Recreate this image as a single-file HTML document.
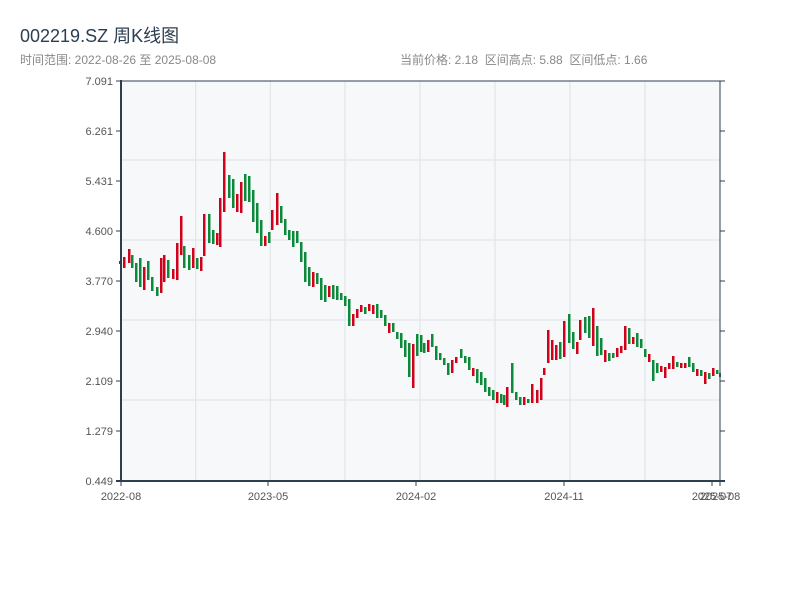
<!DOCTYPE html>
<html><head><meta charset="utf-8"><style>
body{margin:0;width:800px;height:600px;background:#fff;font-family:"Liberation Sans","Noto Sans CJK SC",sans-serif;position:relative;overflow:hidden}
.t{position:absolute;left:20px;top:22px;font-size:18px;color:#2c3e50;z-index:2}
.s{position:absolute;top:51px;font-size:12px;color:#888;z-index:2}
svg{position:absolute;left:0;top:0}
svg text{font-family:"Liberation Sans",sans-serif;font-size:11px;fill:#555}
.r{fill:#d0021b}.g{fill:#0a8a3a}
</style></head><body>
<div class="t">002219.SZ 周K线图</div>
<div class="s" style="left:20px">时间范围: 2022-08-26 至 2025-08-08</div>
<div class="s" style="left:400px">当前价格: 2.18 &nbsp;区间高点: 5.88 &nbsp;区间低点: 1.66</div>
<svg width="800" height="600" viewBox="0 0 800 600">
<rect x="121" y="81" width="599" height="400" fill="#f6f8fa"/>
<g stroke="#dfe2e6" stroke-width="1">
<line x1="195.7" y1="81" x2="195.7" y2="481"/><line x1="270.3" y1="81" x2="270.3" y2="481"/><line x1="345" y1="81" x2="345" y2="481"/><line x1="420" y1="81" x2="420" y2="481"/><line x1="495" y1="81" x2="495" y2="481"/><line x1="570" y1="81" x2="570" y2="481"/><line x1="645" y1="81" x2="645" y2="481"/>
<line x1="121" y1="160" x2="720" y2="160"/><line x1="121" y1="240" x2="720" y2="240"/><line x1="121" y1="320" x2="720" y2="320"/><line x1="121" y1="400" x2="720" y2="400"/>
</g>
<g>
<rect class="r" x="119" y="261" width="2.5" height="3"/>
<rect class="r" x="123" y="257" width="2.5" height="11"/>
<rect class="r" x="128" y="249" width="2.5" height="14"/>
<rect class="g" x="131" y="255" width="2.5" height="13"/>
<rect class="g" x="135" y="263" width="2.5" height="19"/>
<rect class="g" x="139" y="258" width="2.5" height="29"/>
<rect class="r" x="143" y="267" width="2.5" height="23"/>
<rect class="g" x="147" y="261" width="2.5" height="19"/>
<rect class="g" x="151" y="277" width="2.5" height="14"/>
<rect class="g" x="156" y="287" width="2.5" height="9"/>
<rect class="r" x="160" y="258" width="2.5" height="35"/>
<rect class="r" x="163" y="255" width="2.5" height="27"/>
<rect class="g" x="167" y="260" width="2.5" height="18"/>
<rect class="r" x="172" y="269" width="2.5" height="10"/>
<rect class="r" x="176" y="243" width="2.5" height="37"/>
<rect class="r" x="180" y="216" width="2.5" height="39"/>
<rect class="g" x="183" y="246" width="2.5" height="22"/>
<rect class="g" x="188" y="255" width="2.5" height="15"/>
<rect class="r" x="192" y="248" width="2.5" height="20"/>
<rect class="g" x="196" y="258" width="2.5" height="11"/>
<rect class="r" x="200" y="257" width="2.5" height="14"/>
<rect class="r" x="203" y="214" width="2.5" height="42"/>
<rect class="g" x="208" y="214" width="2.5" height="29"/>
<rect class="g" x="212" y="230" width="2.5" height="14"/>
<rect class="r" x="216" y="233" width="2.5" height="12"/>
<rect class="r" x="219" y="198" width="2.5" height="49"/>
<rect class="r" x="223" y="152" width="2.5" height="60"/>
<rect class="g" x="228" y="175" width="2.5" height="23"/>
<rect class="g" x="232" y="179" width="2.5" height="29"/>
<rect class="r" x="236" y="194" width="2.5" height="18"/>
<rect class="r" x="240" y="182" width="2.5" height="31"/>
<rect class="g" x="244" y="174" width="2.5" height="27"/>
<rect class="g" x="248" y="176" width="2.5" height="26"/>
<rect class="g" x="252" y="190" width="2.5" height="32"/>
<rect class="g" x="256" y="203" width="2.5" height="30"/>
<rect class="g" x="260" y="220" width="2.5" height="26"/>
<rect class="r" x="264" y="236" width="2.5" height="10"/>
<rect class="g" x="268" y="232" width="2.5" height="11"/>
<rect class="r" x="271" y="210" width="2.5" height="20"/>
<rect class="r" x="276" y="193" width="2.5" height="32"/>
<rect class="g" x="280" y="206" width="2.5" height="17"/>
<rect class="g" x="284" y="219" width="2.5" height="16"/>
<rect class="g" x="288" y="230" width="2.5" height="10"/>
<rect class="g" x="292" y="231" width="2.5" height="16"/>
<rect class="g" x="296" y="231" width="2.5" height="12"/>
<rect class="g" x="300" y="242" width="2.5" height="20"/>
<rect class="g" x="304" y="252" width="2.5" height="30"/>
<rect class="g" x="308" y="267" width="2.5" height="19"/>
<rect class="r" x="312" y="272" width="2.5" height="15"/>
<rect class="g" x="316" y="273" width="2.5" height="11"/>
<rect class="g" x="320" y="278" width="2.5" height="22"/>
<rect class="g" x="324" y="285" width="2.5" height="17"/>
<rect class="r" x="328" y="286" width="2.5" height="11"/>
<rect class="g" x="332" y="285" width="2.5" height="14"/>
<rect class="g" x="336" y="286" width="2.5" height="14"/>
<rect class="g" x="340" y="293" width="2.5" height="7"/>
<rect class="g" x="344" y="296" width="2.5" height="10"/>
<rect class="g" x="348" y="299" width="2.5" height="27"/>
<rect class="r" x="352" y="314" width="2.5" height="12"/>
<rect class="r" x="356" y="309" width="2.5" height="9"/>
<rect class="r" x="360" y="305" width="2.5" height="7"/>
<rect class="g" x="364" y="307" width="2.5" height="7"/>
<rect class="r" x="368" y="304" width="2.5" height="7"/>
<rect class="r" x="372" y="305" width="2.5" height="9"/>
<rect class="g" x="376" y="304" width="2.5" height="14"/>
<rect class="g" x="380" y="310" width="2.5" height="8"/>
<rect class="g" x="384" y="315" width="2.5" height="11"/>
<rect class="r" x="388" y="323" width="2.5" height="10"/>
<rect class="g" x="392" y="323" width="2.5" height="9"/>
<rect class="g" x="396" y="332" width="2.5" height="7"/>
<rect class="g" x="400" y="333" width="2.5" height="15"/>
<rect class="g" x="404" y="340" width="2.5" height="17"/>
<rect class="g" x="408" y="343" width="2.5" height="34"/>
<rect class="r" x="412" y="344" width="2.5" height="44"/>
<rect class="g" x="416" y="334" width="2.5" height="22"/>
<rect class="g" x="420" y="335" width="2.5" height="17"/>
<rect class="g" x="423" y="343" width="2.5" height="10"/>
<rect class="r" x="427" y="340" width="2.5" height="12"/>
<rect class="g" x="431" y="334" width="2.5" height="13"/>
<rect class="g" x="435" y="346" width="2.5" height="14"/>
<rect class="g" x="439" y="353" width="2.5" height="7"/>
<rect class="g" x="443" y="358" width="2.5" height="7"/>
<rect class="g" x="447" y="363" width="2.5" height="12"/>
<rect class="r" x="451" y="360" width="2.5" height="13"/>
<rect class="r" x="455" y="357" width="2.5" height="6"/>
<rect class="g" x="460" y="349" width="2.5" height="9"/>
<rect class="g" x="464" y="356" width="2.5" height="7"/>
<rect class="g" x="468" y="357" width="2.5" height="13"/>
<rect class="r" x="472" y="368" width="2.5" height="8"/>
<rect class="g" x="476" y="369" width="2.5" height="14"/>
<rect class="g" x="480" y="372" width="2.5" height="13"/>
<rect class="g" x="484" y="378" width="2.5" height="14"/>
<rect class="g" x="488" y="387" width="2.5" height="9"/>
<rect class="g" x="492" y="390" width="2.5" height="10"/>
<rect class="r" x="496" y="392" width="2.5" height="11"/>
<rect class="g" x="500" y="394" width="2.5" height="9"/>
<rect class="g" x="503" y="395" width="2.5" height="10"/>
<rect class="r" x="506" y="387" width="2.5" height="20"/>
<rect class="g" x="511" y="363" width="2.5" height="30"/>
<rect class="g" x="515" y="392" width="2.5" height="8"/>
<rect class="g" x="519" y="397" width="2.5" height="8"/>
<rect class="r" x="523" y="397" width="2.5" height="8"/>
<rect class="g" x="527" y="399" width="2.5" height="4"/>
<rect class="r" x="531" y="384" width="2.5" height="19"/>
<rect class="r" x="536" y="390" width="2.5" height="13"/>
<rect class="r" x="540" y="378" width="2.5" height="22"/>
<rect class="r" x="543" y="368" width="2.5" height="7"/>
<rect class="r" x="547" y="330" width="2.5" height="33"/>
<rect class="r" x="551" y="340" width="2.5" height="20"/>
<rect class="r" x="555" y="345" width="2.5" height="15"/>
<rect class="g" x="559" y="342" width="2.5" height="17"/>
<rect class="r" x="563" y="321" width="2.5" height="36"/>
<rect class="g" x="568" y="314" width="2.5" height="29"/>
<rect class="g" x="572" y="332" width="2.5" height="17"/>
<rect class="r" x="576" y="342" width="2.5" height="12"/>
<rect class="r" x="579" y="320" width="2.5" height="20"/>
<rect class="g" x="584" y="317" width="2.5" height="16"/>
<rect class="g" x="588" y="316" width="2.5" height="22"/>
<rect class="r" x="592" y="308" width="2.5" height="38"/>
<rect class="g" x="596" y="326" width="2.5" height="30"/>
<rect class="g" x="600" y="338" width="2.5" height="17"/>
<rect class="r" x="604" y="350" width="2.5" height="12"/>
<rect class="g" x="608" y="353" width="2.5" height="8"/>
<rect class="g" x="612" y="353" width="2.5" height="5"/>
<rect class="r" x="616" y="348" width="2.5" height="9"/>
<rect class="r" x="620" y="346" width="2.5" height="7"/>
<rect class="r" x="624" y="326" width="2.5" height="24"/>
<rect class="g" x="628" y="328" width="2.5" height="16"/>
<rect class="r" x="632" y="337" width="2.5" height="7"/>
<rect class="g" x="636" y="333" width="2.5" height="14"/>
<rect class="g" x="640" y="339" width="2.5" height="9"/>
<rect class="g" x="644" y="349" width="2.5" height="8"/>
<rect class="r" x="648" y="354" width="2.5" height="8"/>
<rect class="g" x="652" y="360" width="2.5" height="21"/>
<rect class="g" x="656" y="363" width="2.5" height="10"/>
<rect class="r" x="660" y="366" width="2.5" height="6"/>
<rect class="r" x="664" y="367" width="2.5" height="11"/>
<rect class="r" x="668" y="363" width="2.5" height="6"/>
<rect class="r" x="672" y="356" width="2.5" height="13"/>
<rect class="g" x="676" y="362" width="2.5" height="5"/>
<rect class="r" x="680" y="363" width="2.5" height="5"/>
<rect class="r" x="684" y="363" width="2.5" height="5"/>
<rect class="g" x="688" y="357" width="2.5" height="10"/>
<rect class="g" x="692" y="363" width="2.5" height="9"/>
<rect class="r" x="696" y="369" width="2.5" height="7"/>
<rect class="g" x="700" y="370" width="2.5" height="6"/>
<rect class="r" x="704" y="372" width="2.5" height="12"/>
<rect class="g" x="708" y="373" width="2.5" height="6"/>
<rect class="r" x="712" y="368" width="2.5" height="8"/>
<rect class="g" x="716" y="370" width="2.5" height="4"/>
<rect class="g" x="719" y="373" width="2" height="4"/>
</g>
<g stroke="#2c3e50">
<line x1="121" y1="80" x2="121" y2="482" stroke-width="2"/>
<line x1="720" y1="81" x2="720" y2="482"/>
<line x1="120" y1="81" x2="720" y2="81"/>
<line x1="116" y1="481" x2="725" y2="481" stroke-width="2"/>
<line x1="116" y1="81" x2="121" y2="81"/><line x1="720" y1="81" x2="725" y2="81"/>
<line x1="116" y1="131" x2="121" y2="131"/><line x1="720" y1="131" x2="725" y2="131"/>
<line x1="116" y1="181" x2="121" y2="181"/><line x1="720" y1="181" x2="725" y2="181"/>
<line x1="116" y1="231" x2="121" y2="231"/><line x1="720" y1="231" x2="725" y2="231"/>
<line x1="116" y1="281" x2="121" y2="281"/><line x1="720" y1="281" x2="725" y2="281"/>
<line x1="116" y1="331" x2="121" y2="331"/><line x1="720" y1="331" x2="725" y2="331"/>
<line x1="116" y1="381" x2="121" y2="381"/><line x1="720" y1="381" x2="725" y2="381"/>
<line x1="116" y1="431" x2="121" y2="431"/><line x1="720" y1="431" x2="725" y2="431"/>
<line x1="121" y1="481" x2="121" y2="486"/><line x1="268" y1="481" x2="268" y2="486"/><line x1="416" y1="481" x2="416" y2="486"/><line x1="564" y1="481" x2="564" y2="486"/><line x1="712" y1="481" x2="712" y2="486"/><line x1="720" y1="481" x2="720" y2="486"/>
</g>
<g text-anchor="end">
<text x="113" y="85">7.091</text><text x="113" y="135">6.261</text><text x="113" y="185">5.431</text><text x="113" y="235">4.600</text><text x="113" y="285">3.770</text><text x="113" y="335">2.940</text><text x="113" y="385">2.109</text><text x="113" y="435">1.279</text><text x="113" y="485">0.449</text>
</g>
<g text-anchor="middle">
<text x="121" y="500">2022-08</text><text x="268" y="500">2023-05</text><text x="416" y="500">2024-02</text><text x="564" y="500">2024-11</text><text x="712" y="500">2025-07</text><text x="720" y="500">2025-08</text>
</g>
</svg>
</body></html>
